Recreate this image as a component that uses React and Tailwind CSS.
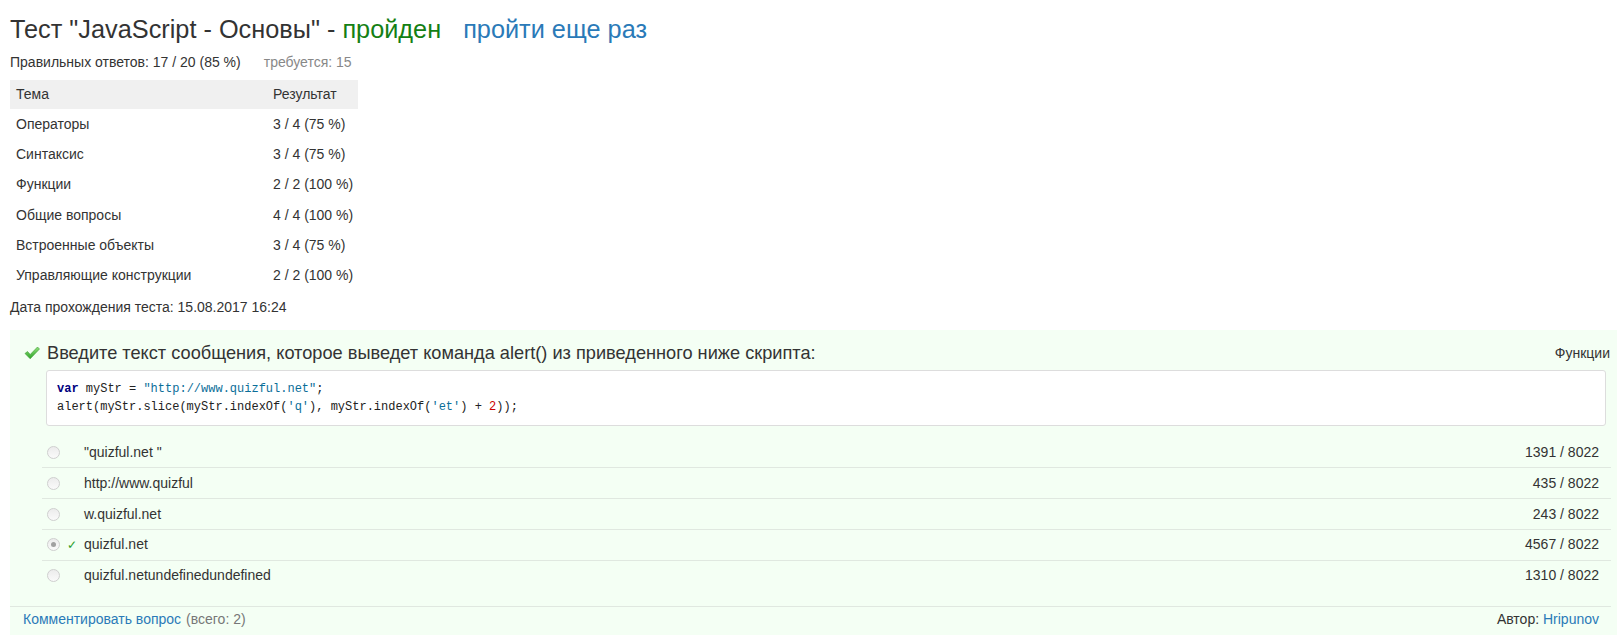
import React from 'react';

const topics = [
  ['Операторы', '3 / 4 (75 %)'],
  ['Синтаксис', '3 / 4 (75 %)'],
  ['Функции', '2 / 2 (100 %)'],
  ['Общие вопросы', '4 / 4 (100 %)'],
  ['Встроенные объекты', '3 / 4 (75 %)'],
  ['Управляющие конструкции', '2 / 2 (100 %)'],
];

const answers = [
  { text: '"quizful.net "', count: '1391 / 8022' },
  { text: 'http://www.quizful', count: '435 / 8022' },
  { text: 'w.quizful.net', count: '243 / 8022' },
  { text: 'quizful.net', count: '4567 / 8022', picked: true },
  { text: 'quizful.netundefinedundefined', count: '1310 / 8022' },
];

function Radio({ checked }) {
  return (
    <span className="w-[13px] h-[13px] rounded-full border border-[#cfcfcf] bg-gradient-to-b from-[#ececec] to-[#fafafa] flex items-center justify-center">
      {checked && <span className="w-[5px] h-[5px] rounded-full bg-[#a0a0a0]" />}
    </span>
  );
}

function BigCheck() {
  return (
    <svg width="16" height="14" viewBox="0 0 16 14">
      <defs>
        <linearGradient id="chk" x1="0" y1="0" x2="0" y2="1">
          <stop offset="0" stopColor="#8fe07a" />
          <stop offset="1" stopColor="#2fa52a" />
        </linearGradient>
      </defs>
      <path d="M1 7.5 L3.5 5.5 L6.2 8.5 L13.5 1 L15.5 3 L6.2 12.8 Z" fill="url(#chk)" stroke="#3a9b2f" strokeWidth="0.6" strokeLinejoin="round" />
    </svg>
  );
}

export default function App() {
  return (
    <div className="bg-white min-h-[638px] text-[#333] font-['Liberation_Sans',Arial,sans-serif] pl-[10px] pt-[14px]">
      <h1 className="text-[25.3px] leading-[30px] font-normal">
        Тест "JavaScript - Основы" - <span className="text-[#148014]">пройден</span>
        <a className="text-[#2a7ab8] ml-[22px]">пройти еще раз</a>
      </h1>

      <div className="text-[14px] leading-[20px] mt-[8px] flex">
        <span>Правильных ответов: 17 / 20 (85 %)</span>
        <span className="text-[#888] ml-[23px]">требуется: 15</span>
      </div>

      <table className="w-[348px] text-[14px] mt-[8px] border-collapse">
        <thead>
          <tr className="bg-[#f0f0f0] h-[29px]">
            <th className="text-left font-normal pl-[6px]">Тема</th>
            <th className="text-left font-normal w-[85px]">Результат</th>
          </tr>
        </thead>
        <tbody>
          {topics.map(([t, r]) => (
            <tr key={t} className="h-[30.3px]">
              <td className="pl-[6px]">{t}</td>
              <td>{r}</td>
            </tr>
          ))}
        </tbody>
      </table>

      <div className="text-[14px] leading-[20px] mt-[6px]">Дата прохождения теста: 15.08.2017 16:24</div>

      <div className="mt-[13px] bg-[#f4fff4]">
        <div className="flex items-start justify-between pl-[14px] pr-[7px] pt-[12px]">
          <div className="flex items-center gap-[7px]">
            <BigCheck />
            <span className="text-[18.2px] leading-[22px]">Введите текст сообщения, которое выведет команда alert() из приведенного ниже скрипта:</span>
          </div>
          <span className="text-[14px] leading-[20px] mt-[1px]">Функции</span>
        </div>

        <div className="ml-[36px] mr-[11px] mt-[6px] bg-white border border-[#ddd] rounded-[3px] px-[10px] py-[9px] font-['Liberation_Mono',Consolas,monospace] text-[12px] leading-[18px] text-[#222]">
          <div>
            <span className="text-[#000080] font-bold">var</span> myStr = <span className="text-[#0b6e99]">"http://www.quizful.net"</span>;
          </div>
          <div>
            alert(myStr.slice(myStr.indexOf(<span className="text-[#0b6e99]">'q'</span>), myStr.indexOf(<span className="text-[#0b6e99]">'et'</span>) + <span className="text-[#c00]">2</span>));
          </div>
        </div>

        <div className="ml-[32px] mr-[6px] mt-[12px]">
          {answers.map((a, i) => (
            <div
              key={a.text}
              className={`flex items-center h-[30.7px] text-[14px] pr-[12px] ${i < answers.length - 1 ? 'border-b border-[#e0e8e0]' : ''}`}
            >
              <span className="w-[5px]" />
              <Radio checked={a.picked} />
              <span className="w-[24px] flex justify-center text-[#2ca02c] text-[12px]">{a.picked ? '✓' : ''}</span>
              <span className="flex-1">{a.text}</span>
              <span>{a.count}</span>
            </div>
          ))}
        </div>

        <div className="mt-[15px] mr-[6px] border-t border-[#e0e8e0] flex justify-between items-start h-[29px] pt-[2px] leading-[20px] text-[14px] pl-[13px] pr-[12px]">
          <div>
            <a className="text-[#2a7ab8]">Комментировать вопрос</a>
            <span className="text-[#777] ml-[5px]">(всего: 2)</span>
          </div>
          <div>
            Автор: <a className="text-[#2a7ab8]">Hripunov</a>
          </div>
        </div>
      </div>
    </div>
  );
}
